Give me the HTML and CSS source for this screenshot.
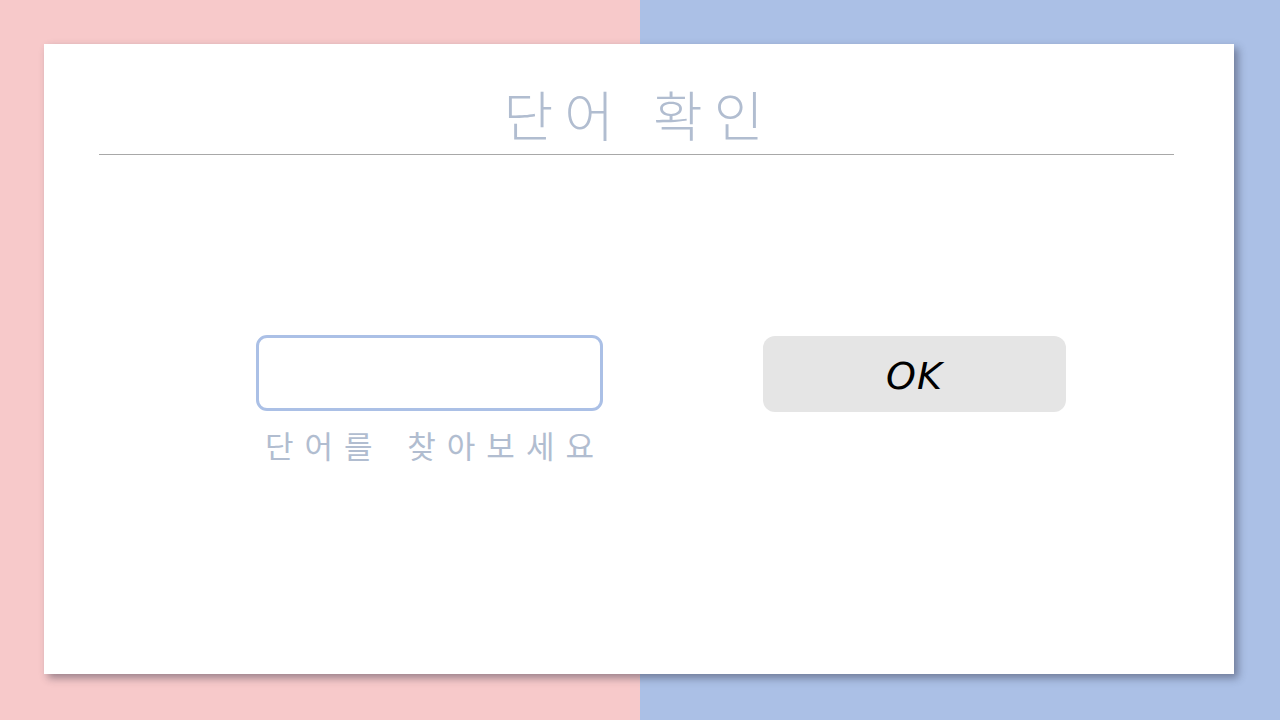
FILE: index.html
```html
<!DOCTYPE html>
<html lang="ko">
<head>
<meta charset="utf-8">
<title>단어 확인</title>
<link rel="stylesheet" href="styles.css">
</head>
<body>
<div class="bg">
  <div class="half pink"></div>
  <div class="half blue"></div>
</div>
<main class="card">
  <h1 class="title">단어 확인</h1>
  <hr class="rule">
  <div class="row">
    <div class="field">
      <input class="word" type="text" aria-label="단어">
      <div class="hint">단어를 찾아보세요</div>
    </div>
    <button class="ok" type="button">OK</button>
  </div>
</main>
</body>
</html>
```

FILE: styles.css
```css
html, body {
  margin: 0;
  padding: 0;
  width: 1280px;
  height: 720px;
  overflow: hidden;
}
body {
  position: relative;
  font-family: "Noto Sans CJK KR", "Noto Sans", sans-serif;
}
.bg {
  position: absolute;
  inset: 0;
  display: flex;
}
.half {
  flex: 1;
}
.pink { background: #f7c9ca; }
.blue { background: #abc0e6; }

.card {
  position: absolute;
  left: 44px;
  top: 44px;
  width: 1190px;
  height: 630px;
  background: #ffffff;
  box-shadow: 4px 4px 8px rgba(40, 40, 60, 0.45);
  box-sizing: border-box;
  padding-top: 30px;
}
.title {
  margin: 0;
  text-align: center;
  font-weight: 300;
  font-size: 54px;
  line-height: 80px;
  letter-spacing: 11px;
  word-spacing: 2px;
  color: #b1bdd0;
}
.rule {
  margin: 0 0 0 55px;
  width: 1075px;
  border: 0;
  border-top: 1px solid #a8a8a8;
  height: 0;
}
.row {
  display: flex;
  align-items: flex-start;
  gap: 160px;
  margin-top: 180px;
  padding-left: 212px;
}
.field {
  display: flex;
  flex-direction: column;
  align-items: center;
  width: 347px;
}
.word {
  box-sizing: border-box;
  width: 347px;
  height: 76px;
  border: 3px solid #abc0e6;
  border-radius: 11px;
  outline: none;
  background: #fff;
  margin: 0;
  padding: 0 12px;
}
.hint {
  margin-top: 12px;
  padding-left: 11px;
  font-size: 31px;
  line-height: 44px;
  letter-spacing: 11px;
  word-spacing: 4px;
  color: #b1bdd0;
  white-space: nowrap;
}
.ok {
  box-sizing: border-box;
  margin-top: 1px;
  width: 303px;
  height: 76px;
  border: 0;
  border-radius: 12px;
  background: #e5e5e5;
  color: #000;
  font-family: cursive, "DejaVu Sans", sans-serif;
  font-style: italic;
  font-size: 38px;
  letter-spacing: 1px;
  padding: 4px 0 0 0;
}
```
